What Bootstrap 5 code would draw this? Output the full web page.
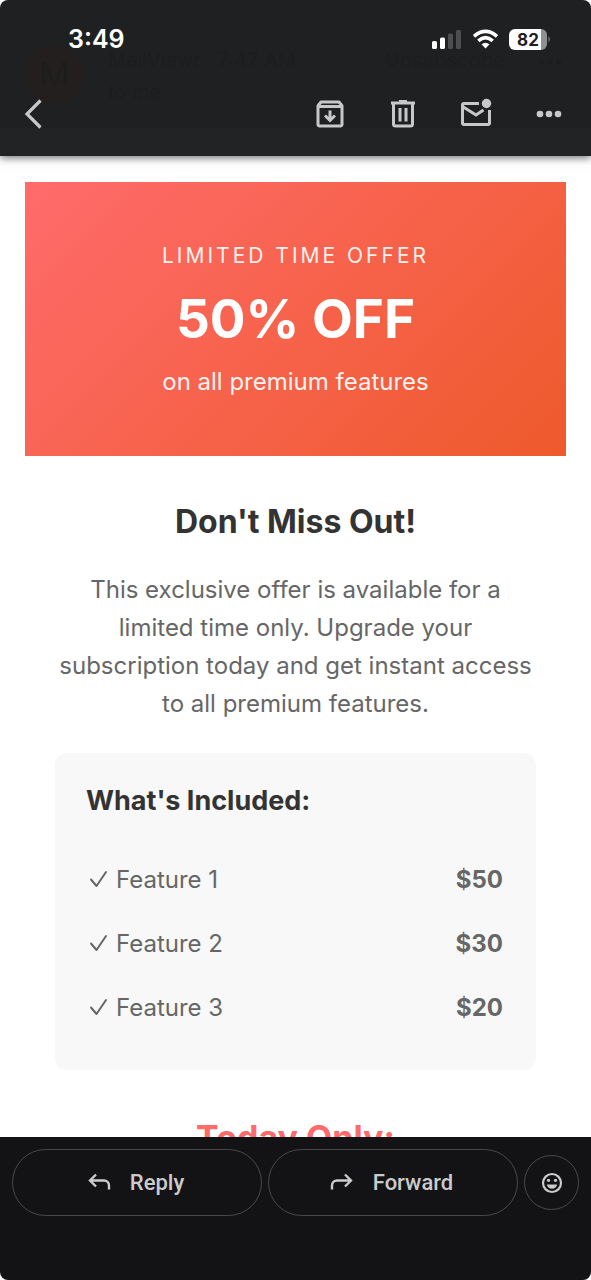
<!DOCTYPE html>
<html lang="en">
<head>
<meta charset="utf-8">
<meta name="viewport" content="width=device-width, initial-scale=1">
<title>Mail</title>
<link href="https://cdn.jsdelivr.net/npm/bootstrap@5.3.0/dist/css/bootstrap.min.css" rel="stylesheet">
<style>
body { font-family: Inter, "Liberation Sans", sans-serif; background: #fff; }
.app-shell { height: 100vh; border-radius: 8px; }
.top-bar { background: linear-gradient(#1f2022 128px, #222325 128px); box-shadow: 0 2px 8px rgba(0,0,0,.55); z-index: 2; padding-bottom: 6px; }
.status-row { height: 78px; padding: 0 40px 0 68px; color: #fff; }
.clock { font-size: 25px; font-weight: 600; line-height: 32px; }
.tool-row { height: 72px; padding: 0 6px 0 0; }
.tool-row .btn { width: 73px; height: 56px; color: #c7c8c8; }
.tool-row .btn.back-btn { width: 66px; }
.tool-row .btn svg { display: block; margin: 0 auto; }
/* message header showing faintly through the bar */
.ghost-row { inset: 44px 28px auto 24px; color: #1c1d1f; font-size: 20px; line-height: 32px; }
.ghost-avatar { width: 60px; height: 60px; background: #221f1e; color: #1e1d1d; font-size: 34px; }
.message { padding: 26px 25px 0; scrollbar-width: none; min-height: 0; }
.message::-webkit-scrollbar { display: none; }
.promo { background: linear-gradient(135deg, #ff6b6b, #ee5a2b); color: #fff; padding: 58px 20px; }
.promo-kicker { font-size: 21px; line-height: 32px; letter-spacing: 3px; opacity: .9; }
.promo-title { font-size: 53px; font-weight: 700; line-height: 64px; margin: 15px 0; }
.promo-note { font-size: 24px; line-height: 32px; opacity: .92; }
.copy { padding: 46px 30px 0; color: #666; font-size: 24px; line-height: 38px; }
.copy h1 { font-size: 32px; font-weight: 700; line-height: 40px; color: #333; margin-bottom: 29px; }
.copy p { margin-bottom: 30px; }
.included { background: #f8f8f8; border-radius: 12px; padding: 28px 31px 30px; margin-bottom: 44px; }
.included h2 { font-size: 27px; font-weight: 700; line-height: 40px; color: #333; margin-bottom: 27px; }
.included table { color: #666; }
.included td, .included th { padding: 13px 2px; font-weight: 400; }
.included td { font-weight: 700; }
.included th svg { margin-right: 6px; vertical-align: -1px; }
.today { font-size: 34px; font-weight: 700; line-height: 48px; color: #ff6b6b; }
.bottom-bar { background: #131315; padding: 12px 12px 64px; gap: 6px; }
.bottom-bar .btn { height: 67px; border: 1px solid #48494b; color: #cbcbcc; font: 500 22px/32px Roboto, sans-serif; }
.bottom-bar .btn.rounded-pill { padding: 0 4px 0 0; }
.bottom-bar .btn.emoji-btn { width: 55px; height: 55px; }
.bottom-bar .btn.emoji-btn svg { display: block; margin: 0 auto; }
</style>
</head>
<body>
<div class="app-shell d-flex flex-column overflow-hidden">
  <header class="top-bar position-relative flex-shrink-0">
    <div class="ghost-row position-absolute d-flex align-items-start" aria-hidden="true">
      <div class="ghost-avatar rounded-circle d-flex align-items-center justify-content-center me-4">M</div>
      <div class="flex-grow-1"><div>MailViewr &nbsp; 7:47 AM</div><div>to me</div></div>
      <div class="me-4 pe-2">Unsubscribe</div>
      <svg width="26" height="32" viewBox="0 0 26 32" fill="currentColor"><circle cx="4" cy="18" r="3"/><circle cx="13" cy="18" r="3"/><circle cx="22" cy="18" r="3"/></svg>
    </div>
    <div class="status-row position-relative d-flex align-items-center justify-content-between">
      <span class="clock">3:49</span>
      <svg width="120" height="24" viewBox="0 0 120 24" role="img" aria-label="Signal, Wi-Fi and battery at 82 percent">
        <g fill="#fff"><rect x="1" y="14" width="5" height="8" rx="1.6"/><rect x="9" y="10.500" width="5" height="11.500" rx="1.600"/></g>
        <g fill="#4d4e50"><rect x="17" y="6.500" width="5" height="15.500" rx="1.600"/><rect x="25" y="3" width="5" height="19" rx="1.600"/></g>
        <g fill="none" stroke="#fff" stroke-width="3.600"><path d="M43 9.300Q54.500-.500 66 9.300"/><path d="M47.300 13.800Q54.500 7.600 61.700 13.800"/></g>
        <path d="M50.500 17.300Q54.500 14.200 58.500 17.300L54.500 21.500Z" fill="#fff"/>
        <path d="M85 2H110a6 6 0 0 1 6 6v9a6 6 0 0 1-6 6H84Z" fill="#8f9091"/>
        <path d="M84 2H110V23H84a6 6 0 0 1-6-6V8a6 6 0 0 1 6-6Z" fill="#fff"/>
        <path d="M117.500 9q2.500 3 0 6.500Z" fill="#8f9091"/>
        <text x="97" y="18.500" text-anchor="middle" font-family="Inter, sans-serif" font-size="17" font-weight="700" fill="#1f2022">82</text>
      </svg>
    </div>
    <div class="tool-row position-relative d-flex align-items-center">
      <button class="btn back-btn border-0 p-0 me-auto" type="button" aria-label="Back"><svg width="20" height="32" viewBox="0 0 20 32" fill="none" stroke="currentColor" stroke-width="3.200"><path d="M17.500 2.500L4 16l13.500 13.500"/></svg></button>
      <button class="btn border-0 p-0" type="button" aria-label="Archive"><svg width="32" height="32" viewBox="0 0 32 32" fill="none" stroke="currentColor" stroke-width="3"><path d="M4 7.800L7 4H25L28 7.800V26.500a1.500 1.500 0 0 1-1.500 1.500h-21A1.500 1.500 0 0 1 4 26.500ZM4 8.500H28" stroke-linejoin="round"/><path d="M16 12.500V22M11 17.500l5 5 5-5"/></svg></button>
      <button class="btn border-0 p-0" type="button" aria-label="Delete"><svg width="32" height="32" viewBox="0 0 32 32" fill="none" stroke="currentColor" stroke-width="3"><path d="M4 5H28M12 3.500h8M6.500 5V26a2 2 0 0 0 2 2h15a2 2 0 0 0 2-2V5"/><path d="M13 10V23.500M19 10V23.500"/></svg></button>
      <button class="btn border-0 p-0" type="button" aria-label="Mark as unread"><svg width="34" height="34" viewBox="0 0 34 34" fill="none" stroke="currentColor" stroke-width="3"><path d="M20 6.500H5A1.500 1.500 0 0 0 3.500 8V26A1.500 1.500 0 0 0 5 27.500H29A1.500 1.500 0 0 0 30.500 26V13M3.500 9.500L17 18l7.500-5"/><circle cx="27.500" cy="6.500" r="4.700" fill="currentColor" stroke="none"/></svg></button>
      <button class="btn border-0 p-0" type="button" aria-label="More options"><svg width="26" height="8" viewBox="0 0 26 8" fill="currentColor"><circle cx="4" cy="4" r="3.300"/><circle cx="13" cy="4" r="3.300"/><circle cx="22" cy="4" r="3.300"/></svg></button>
    </div>
  </header>

  <main class="message flex-grow-1 overflow-auto">
    <section class="promo text-center">
      <div class="promo-kicker">LIMITED TIME OFFER</div>
      <div class="promo-title">50% OFF</div>
      <div class="promo-note">on all premium features</div>
    </section>
    <section class="copy">
      <h1 class="text-center">Don't Miss Out!</h1>
      <p class="text-center">This exclusive offer is available for a limited time only. Upgrade your subscription today and get instant access to all premium features.</p>
      <div class="included">
        <h2>What's Included:</h2>
        <table class="w-100">
          <tbody>
            <tr><th scope="row"><svg width="22" height="20" viewBox="0 0 22 20" fill="none" stroke="currentColor" stroke-width="2" stroke-linecap="round" stroke-linejoin="round"><path d="M3 10.500L8.500 17 18 3"/></svg>Feature 1</th><td class="text-end">$50</td></tr>
            <tr><th scope="row"><svg width="22" height="20" viewBox="0 0 22 20" fill="none" stroke="currentColor" stroke-width="2" stroke-linecap="round" stroke-linejoin="round"><path d="M3 10.500L8.500 17 18 3"/></svg>Feature 2</th><td class="text-end">$30</td></tr>
            <tr><th scope="row"><svg width="22" height="20" viewBox="0 0 22 20" fill="none" stroke="currentColor" stroke-width="2" stroke-linecap="round" stroke-linejoin="round"><path d="M3 10.500L8.500 17 18 3"/></svg>Feature 3</th><td class="text-end">$20</td></tr>
          </tbody>
        </table>
      </div>
      <div class="today text-center">Today Only:</div>
    </section>
  </main>

  <footer class="bottom-bar d-flex align-items-center flex-shrink-0">
    <button class="btn rounded-pill flex-fill w-50 d-flex align-items-center justify-content-center" type="button"><svg class="me-3" width="28" height="24" viewBox="0 0 28 24" fill="none" stroke="currentColor" stroke-width="2.400"><path d="M10 3.500L4 9.500l6 6M4.500 9.500H18a5 5 0 0 1 5 5V18.500"/></svg>Reply</button>
    <button class="btn rounded-pill flex-fill w-50 d-flex align-items-center justify-content-center" type="button"><svg class="me-3" width="28" height="24" viewBox="0 0 28 24" fill="none" stroke="currentColor" stroke-width="2.400"><path d="M16 3.500l6 6-6 6M21.500 9.500H8a5 5 0 0 0-5 5V18.500"/></svg>Forward</button>
    <button class="btn emoji-btn rounded-circle flex-shrink-0 p-0" type="button" aria-label="Add reaction"><svg width="22" height="22" viewBox="0 0 22 22"><circle cx="11" cy="11" r="9" fill="none" stroke="currentColor" stroke-width="2.200"/><circle cx="7.500" cy="8.300" r="1.600" fill="currentColor"/><circle cx="14.500" cy="8.300" r="1.600" fill="currentColor"/><path d="M5.800 12.500H16.200Q14.800 16.800 11 16.800T5.800 12.500Z" fill="currentColor"/></svg></button>
  </footer>
</div>
<script src="https://cdn.jsdelivr.net/npm/bootstrap@5.3.0/dist/js/bootstrap.bundle.min.js"></script>
</body>
</html>
